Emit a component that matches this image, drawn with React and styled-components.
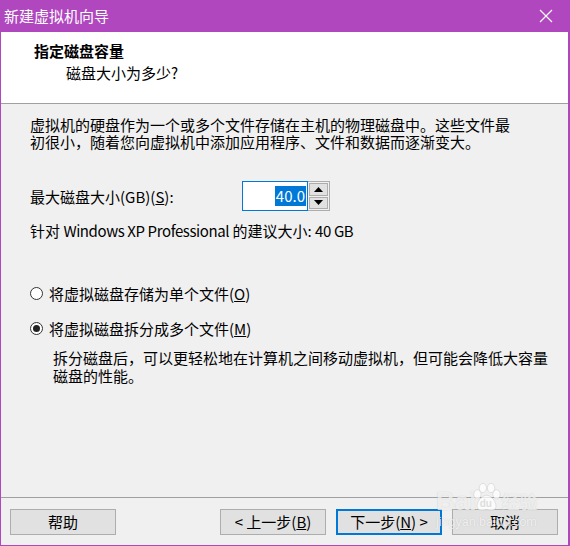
import React from 'react';
import styled, { createGlobalStyle } from 'styled-components';

const GlobalStyle = createGlobalStyle`
  html, body {
    margin: 0;
    padding: 0;
    background: #ffffff;
  }
  body {
    font-family: "Noto Sans CJK SC", "Noto Sans", sans-serif;
    font-size: 15px;
    color: #000;
  }
`

const PURPLE = '#b047bf';

function App() {
  return (
    <Window>
      <GlobalStyle />
      <TitleBar>
        <Title>新建虚拟机向导</Title>
        <CloseButton aria-label="关闭">
          <svg width="14" height="14" viewBox="0 0 14 14">
            <path d="M1 1 L13 13 M13 1 L1 13" stroke="#fff" strokeWidth="1.2" fill="none" />
          </svg>
        </CloseButton>
      </TitleBar>

      <Header>
        <HeaderTitle>指定磁盘容量</HeaderTitle>
        <HeaderSub>磁盘大小为多少?</HeaderSub>
      </Header>

      <Body>
        <Paragraph>
          虚拟机的硬盘作为一个或多个文件存储在主机的物理磁盘中。这些文件最<br />
          初很小，随着您向虚拟机中添加应用程序、文件和数据而逐渐变大。
        </Paragraph>

        <SizeRow>
          <FieldLabel>最大磁盘大小(GB)(<u>S</u>):</FieldLabel>
          <Spinner>
            <SpinInput><Selected>40.0</Selected></SpinInput>
            <SpinButtons>
              <SpinButton>
                <svg width="9" height="5" viewBox="0 0 9 5"><path d="M0 5 L4.5 0 L9 5 Z" fill="#000" /></svg>
              </SpinButton>
              <SpinButton>
                <svg width="9" height="5" viewBox="0 0 9 5"><path d="M0 0 L9 0 L4.5 5 Z" fill="#000" /></svg>
              </SpinButton>
            </SpinButtons>
          </Spinner>
        </SizeRow>

        <Recommend>针对 <Latin>Windows XP Professional</Latin> 的建议大小: <Latin>40 GB</Latin></Recommend>

        <RadioRow $first>
          <Radio />
          <span>将虚拟磁盘存储为单个文件(<u>O</u>)</span>
        </RadioRow>
        <RadioRow>
          <Radio $checked />
          <span>将虚拟磁盘拆分成多个文件(<u>M</u>)</span>
        </RadioRow>
        <Description>
          拆分磁盘后，可以更轻松地在计算机之间移动虚拟机，但可能会降低大容量<br />
          磁盘的性能。
        </Description>
      </Body>

      <Footer>
        <Button>帮助</Button>
        <RightButtons>
          <Button>&lt; 上一步(<u>B</u>)</Button>
          <Button $default>下一步(<u>N</u>) &gt;</Button>
          <Button>取消</Button>
        </RightButtons>
        <Watermark>
          <WmTop>
            <WmBai>Bai</WmBai>
            <PawIcon width="31" height="30" viewBox="0 0 34 32">
              <g fill="rgba(255,255,255,0.75)" stroke="rgba(160,160,160,0.35)" strokeWidth="0.8">
                <ellipse cx="7" cy="12" rx="4" ry="5" />
                <ellipse cx="13" cy="5" rx="4" ry="5" />
                <ellipse cx="22" cy="5" rx="4" ry="5" />
                <ellipse cx="28" cy="12" rx="4" ry="5" />
                <path d="M17 13 C11 13 5 22 7 27 C9 31 14 29 17 29 C20 29 25 31 27 27 C29 22 23 13 17 13 Z" />
              </g>
              <text x="9.5" y="26" fontSize="11" fontWeight="700" fill="rgba(200,200,200,0.6)" fontFamily="Liberation Sans, sans-serif">du</text>
            </PawIcon>
            <WmJing>经验</WmJing>
          </WmTop>
          <WmUrl>jingyan.baidu.com</WmUrl>
        </Watermark>
      </Footer>
    </Window>
  );
}

const Window = styled.div`
  width: 570px;
  height: 546px;
  box-sizing: border-box;
  border: 1px solid ${PURPLE};
  border-top: none;
  border-right-width: 2px;
  background: #f0f0f0;
  display: flex;
  flex-direction: column;
  overflow: hidden;
`

const TitleBar = styled.div`
  height: 32px;
  margin: 0 -2px 0 -1px;
  background: ${PURPLE};
  display: flex;
  align-items: center;
  justify-content: space-between;
  padding: 0 0 0 4px;
  flex-shrink: 0;
`

const Title = styled.div`
  color: #fff;
  font-size: 15px;
  line-height: 20px;
  margin-top: -1px;
`

const CloseButton = styled.div`
  width: 46px;
  height: 32px;
  display: flex;
  align-items: center;
  justify-content: center;
  margin-right: 1px;
`

const Header = styled.div`
  height: 72px;
  background: #fff;
  border-bottom: 1px solid #a0a0a0;
  box-sizing: border-box;
  padding-top: 41px;
  flex-shrink: 0;
`

const HeaderTitle = styled.div`
  font-weight: 700;
  margin-left: 33px;
  line-height: 20px;
  margin-top: -32px;
`

const HeaderSub = styled.div`
  margin-left: 65px;
  line-height: 20px;
  margin-top: 2px;
`

const Body = styled.div`
  flex: 1;
  padding: 12px 0 0 29px;
  display: flex;
  flex-direction: column;
`

const Paragraph = styled.div`
  line-height: 17px;
  white-space: nowrap;
`

const SizeRow = styled.div`
  display: flex;
  align-items: center;
  margin-top: 31px;
  height: 30px;
`

const FieldLabel = styled.div`
  width: 212px;
  line-height: 17px;
`

const Spinner = styled.div`
  display: flex;
  height: 30px;
`

const SpinInput = styled.div`
  width: 66px;
  height: 30px;
  box-sizing: border-box;
  border: 1px solid #0078d7;
  background: #fff;
  display: flex;
  align-items: center;
  justify-content: flex-end;
  padding-right: 1px;
`

const Selected = styled.span`
  background: #0078d7;
  color: #fff;
  font-size: 15px;
  line-height: 20px;
  padding: 0 1px;
`

const SpinButtons = styled.div`
  display: flex;
  flex-direction: column;
  border: 1px solid #adadad;
  border-left: none;
  box-sizing: border-box;
  height: 30px;
  width: 22px;
`

const SpinButton = styled.div`
  flex: 1;
  background: #e1e1e1;
  border: 1px solid #adadad;
  margin: 1px 1px 0 1px;
  display: flex;
  align-items: center;
  justify-content: center;
  & + & {
    margin-bottom: 1px;
  }
`

const Recommend = styled.div`
  margin-top: 11px;
  line-height: 17px;
`

const Latin = styled.span`
  letter-spacing: -0.4px;
`

const RadioRow = styled.div`
  display: flex;
  align-items: center;
  gap: 6px;
  line-height: 17px;
  margin-top: ${p => (p.$first ? '46px' : '18px')};
`

const Radio = styled.span`
  width: 13px;
  height: 13px;
  box-sizing: border-box;
  border-radius: 50%;
  border: 1px solid #333;
  background: #fff;
  position: relative;
  flex-shrink: 0;
  &::after {
    content: '';
    display: ${p => (p.$checked ? 'block' : 'none')};
    position: absolute;
    left: 2px;
    top: 2px;
    width: 7px;
    height: 7px;
    border-radius: 50%;
    background: #222;
  }
`

const Description = styled.div`
  margin: 12px 0 0 23px;
  line-height: 18px;
  white-space: nowrap;
`

const Footer = styled.div`
  height: 48px;
  box-sizing: border-box;
  border-top: 1px solid #a0a0a0;
  padding: 11px 10px 0 9px;
  display: flex;
  align-items: flex-start;
  justify-content: space-between;
  position: relative;
  flex-shrink: 0;
`

const RightButtons = styled.div`
  display: flex;
  gap: 10px;
`

const Button = styled.div`
  width: 106px;
  height: 26px;
  box-sizing: border-box;
  background: #e1e1e1;
  border: ${p => (p.$default ? '2px solid #0078d7' : '1px solid #adadad')};
  display: flex;
  align-items: center;
  justify-content: center;
  line-height: 18px;
  white-space: nowrap;
`

const Watermark = styled.div`
  position: absolute;
  left: 435px;
  top: -15px;
  display: flex;
  flex-direction: column;
  align-items: flex-start;
  pointer-events: none;
`

const WmTop = styled.div`
  display: flex;
  align-items: flex-end;
`

const PawIcon = styled.svg`
  margin: 0 -1px 0 -5px;
`

const WmBai = styled.span`
  font-family: "Liberation Sans", sans-serif;
  font-weight: 700;
  font-size: 26px;
  line-height: 24px;
  color: rgba(255, 255, 255, 0.7);
  text-shadow: 0 0 1px rgba(120, 120, 120, 0.35);
`

const WmJing = styled.span`
  font-size: 18px;
  line-height: 24px;
  color: rgba(255, 255, 255, 0.7);
  text-shadow: 0 0 1px rgba(120, 120, 120, 0.35);
  font-weight: 700;
`

const WmUrl = styled.span`
  font-family: "Liberation Sans", sans-serif;
  font-size: 12.5px;
  line-height: 14px;
  color: rgba(255, 255, 255, 0.75);
  text-shadow: 0 0 1px rgba(120, 120, 120, 0.35);
  margin-top: 2px;
`

export default App;
